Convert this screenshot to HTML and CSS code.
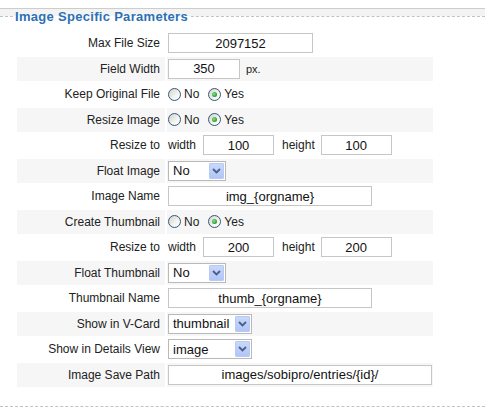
FILE: index.html
```html
<!DOCTYPE html>
<html>
<head>
<meta charset="utf-8">
<title>Image Specific Parameters</title>
<link rel="stylesheet" href="styles.css">
</head>
<body>
<div class="panel">
  <fieldset class="params">
    <legend>Image Specific Parameters</legend>
    <div class="form">
      <div class="key">Max File Size</div>
      <div class="val"><span class="box w-file">2097152</span></div>

      <div class="key">Field Width</div>
      <div class="val"><span class="box w-field">350</span><span class="unit">px.</span></div>

      <div class="key">Keep Original File</div>
      <div class="val"><span class="radio"></span><span class="opt">No</span><span class="radio on"></span><span class="opt">Yes</span></div>

      <div class="key">Resize Image</div>
      <div class="val"><span class="radio"></span><span class="opt">No</span><span class="radio on"></span><span class="opt">Yes</span></div>

      <div class="key">Resize to</div>
      <div class="val"><span class="dim">width</span><span class="box w-dim">100</span><span class="dim dim-h">height</span><span class="box w-dim">100</span></div>

      <div class="key">Float Image</div>
      <div class="val"><span class="select w-float"><span class="sel-text">No</span><span class="sel-btn"><svg width="9" height="6" viewBox="0 0 9 6"><polyline points="1,1 4.5,4.5 8,1" fill="none" stroke="#4a5f86" stroke-width="1.8"/></svg></span></span></div>

      <div class="key">Image Name</div>
      <div class="val"><span class="box w-name">img_{orgname}</span></div>

      <div class="key">Create Thumbnail</div>
      <div class="val"><span class="radio"></span><span class="opt">No</span><span class="radio on"></span><span class="opt">Yes</span></div>

      <div class="key">Resize to</div>
      <div class="val"><span class="dim">width</span><span class="box w-dim">200</span><span class="dim dim-h">height</span><span class="box w-dim">200</span></div>

      <div class="key">Float Thumbnail</div>
      <div class="val"><span class="select w-float"><span class="sel-text">No</span><span class="sel-btn"><svg width="9" height="6" viewBox="0 0 9 6"><polyline points="1,1 4.5,4.5 8,1" fill="none" stroke="#4a5f86" stroke-width="1.8"/></svg></span></span></div>

      <div class="key">Thumbnail Name</div>
      <div class="val"><span class="box w-name">thumb_{orgname}</span></div>

      <div class="key">Show in V-Card</div>
      <div class="val"><span class="select w-show"><span class="sel-text">thumbnail</span><span class="sel-btn"><svg width="9" height="6" viewBox="0 0 9 6"><polyline points="1,1 4.5,4.5 8,1" fill="none" stroke="#4a5f86" stroke-width="1.8"/></svg></span></span></div>

      <div class="key">Show in Details View</div>
      <div class="val"><span class="select w-show"><span class="sel-text">image</span><span class="sel-btn"><svg width="9" height="6" viewBox="0 0 9 6"><polyline points="1,1 4.5,4.5 8,1" fill="none" stroke="#4a5f86" stroke-width="1.8"/></svg></span></span></div>

      <div class="key">Image Save Path</div>
      <div class="val"><span class="box w-path">images/sobipro/entries/{id}/</span></div>
    </div>
  </fieldset>
</div>
</body>
</html>
```
FILE: styles.css
```css
html, body {
  margin: 0;
  padding: 0;
  background: #ffffff;
}

body {
  font-family: "Liberation Sans", Arial, sans-serif;
  font-size: 12px;
  color: #222222;
}

.panel {
  margin-top: 8px;
  border-top: 1px solid #cdcdcd;
  background: #f3f3f3;
  height: 398px;
}

.params {
  margin: 0;
  padding: 0 0 19.5px 0;
  border: none;
  border-top: 1px dashed #c2c2c2;
  border-bottom: 1px dashed #c2c2c2;
  background: #ffffff;
  min-width: 0;
}

.params legend {
  margin-left: 13px;
  padding: 0 2px;
  font-size: 13px;
  font-weight: bold;
  letter-spacing: 0.3px;
  color: #2c70b3;
  line-height: 15px;
}

.form {
  display: grid;
  grid-template-columns: 148px 266px;
  grid-auto-rows: 23.5px;
  gap: 2px;
  margin: 7.5px 0 0 17px;
}

.form > div:nth-child(4n+3),
.form > div:nth-child(4n+4) {
  background: #f6f6f6;
}

.key {
  display: flex;
  align-items: center;
  justify-content: flex-end;
  padding-right: 5px;
  white-space: nowrap;
}

.val {
  display: flex;
  align-items: center;
  padding-left: 1px;
  white-space: nowrap;
}

.box {
  box-sizing: border-box;
  height: 20px;
  border: 1px solid #c6c6c6;
  background: #ffffff;
  display: flex;
  align-items: center;
  justify-content: center;
  font-size: 13px;
  color: #111111;
}

.w-file { width: 145px; }
.w-field { width: 72px; }
.w-dim { width: 71px; }
.w-name { width: 204px; }
.w-path { width: 264px; }

.unit {
  margin-left: 6px;
  font-size: 11px;
  color: #222222;
}

.dim {
  margin-right: 7px;
}

.dim-h {
  margin-left: 8px;
  margin-right: 6px;
}

.radio {
  box-sizing: border-box;
  width: 13px;
  height: 13px;
  border-radius: 50%;
  border: 1px solid #34577d;
  background: linear-gradient(135deg, #d4d4cc 0%, #f4f4f0 60%, #ffffff 100%);
  display: inline-flex;
  align-items: center;
  justify-content: center;
}

.radio.on::after {
  content: "";
  width: 5px;
  height: 5px;
  border-radius: 50%;
  background: radial-gradient(circle at 40% 40%, #8fe08f 0%, #2fa82f 60%, #1f8a1f 100%);
}

.opt {
  margin-left: 3px;
  margin-right: 9px;
}

.select {
  box-sizing: border-box;
  height: 20px;
  border: 1px solid #b9b9b9;
  background: #ffffff;
  display: flex;
  align-items: center;
  justify-content: space-between;
  padding: 0 1px 0 4px;
  font-size: 13px;
  color: #111111;
}

.w-float { width: 58px; }
.w-show { width: 84px; }

.sel-btn {
  box-sizing: border-box;
  width: 15px;
  height: 16px;
  border: 1px solid #b7c9f4;
  border-radius: 1px;
  background: linear-gradient(180deg, #c8d8fc 0%, #b1c6f7 100%);
  display: flex;
  align-items: center;
  justify-content: center;
}

.sel-btn svg {
  display: block;
}
```
